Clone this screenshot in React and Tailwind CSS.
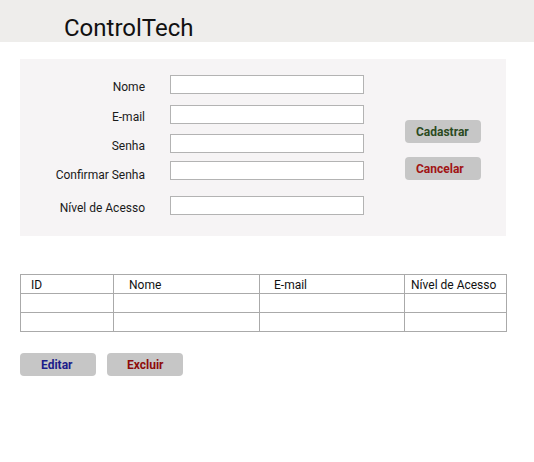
import React from 'react';

const fields = [
  { label: 'Nome', mt: 'mt-[16px]', pt: 'pt-[5px]' },
  { label: 'E-mail', mt: 'mt-[11px]', pt: 'pt-[5px]' },
  { label: 'Senha', mt: 'mt-[10px]', pt: 'pt-[5px]' },
  { label: 'Confirmar Senha', mt: 'mt-[8px]', pt: 'pt-[9px]' },
  { label: 'Nível de Acesso', mt: 'mt-[16px]', pt: 'pt-[5px]' },
];

const columns = [
  { title: 'ID', className: 'w-[93px] pl-[10px]' },
  { title: 'Nome', className: 'w-[146px] pl-[15px]' },
  { title: 'E-mail', className: 'w-[145px] pl-[14px]' },
  { title: 'Nível de Acesso', className: 'w-[102px] pl-[6px]' },
];

const App = () => {
  return (
    <div className="w-[534px] h-[462px] bg-white font-['Roboto','Liberation_Sans',sans-serif] text-[#1a1a1a]">
      <header className="h-[42px] bg-[#eeedeb] pl-[64px] pt-[14px]">
        <h1 className="text-[24px] leading-[28px] text-[#111]">ControlTech</h1>
      </header>

      <section className="ml-[20px] mt-[17px] flex h-[177px] w-[486px] bg-[#f6f4f5]">
        <div className="flex flex-col">
          {fields.map((field) => (
            <div key={field.label} className={`flex h-[19px] items-center ${field.mt}`}>
              <label className={`w-[125px] ${field.pt} text-right text-[12px] leading-[14px]`}>
                {field.label}
              </label>
              <input
                type="text"
                className="ml-[25px] h-[19px] w-[194px] border border-[#b3b3b3] bg-white outline-none"
              />
            </div>
          ))}
        </div>

        <div className="ml-[41px] flex flex-col gap-[14px] pt-[61px]">
          <button className="h-[23px] w-[76px] rounded-[4px] bg-[#c6c6c6] pl-[11px] text-left text-[12px] font-bold text-[#2b4a1e]">
            Cadastrar
          </button>
          <button className="h-[23px] w-[76px] rounded-[4px] bg-[#c6c6c6] pl-[11px] text-left text-[12px] font-bold text-[#a11414]">
            Cancelar
          </button>
        </div>
      </section>

      <table className="ml-[20px] mt-[38px] w-[486px] table-fixed border-collapse text-[12px]">
        <thead>
          <tr className="h-[19px]">
            {columns.map((col) => (
              <th
                key={col.title}
                className={`${col.className} border border-[#aaaaaa] pt-[2px] text-left font-normal leading-[14px] text-[#111]`}
              >
                {col.title}
              </th>
            ))}
          </tr>
        </thead>
        <tbody>
          {[0, 1].map((row) => (
            <tr key={row} className="h-[19px]">
              {columns.map((col) => (
                <td key={col.title} className="border border-[#aaaaaa]" />
              ))}
            </tr>
          ))}
        </tbody>
      </table>

      <div className="ml-[20px] mt-[21px] flex gap-[11px]">
        <button className="h-[23px] w-[76px] rounded-[4px] bg-[#c6c6c6] pl-[21px] text-left text-[12px] font-bold text-[#1c1c8a]">
          Editar
        </button>
        <button className="h-[23px] w-[76px] rounded-[4px] bg-[#c6c6c6] pl-[20px] text-left text-[12px] font-bold text-[#8e0b0b]">
          Excluir
        </button>
      </div>
    </div>
  );
};

export default App;
